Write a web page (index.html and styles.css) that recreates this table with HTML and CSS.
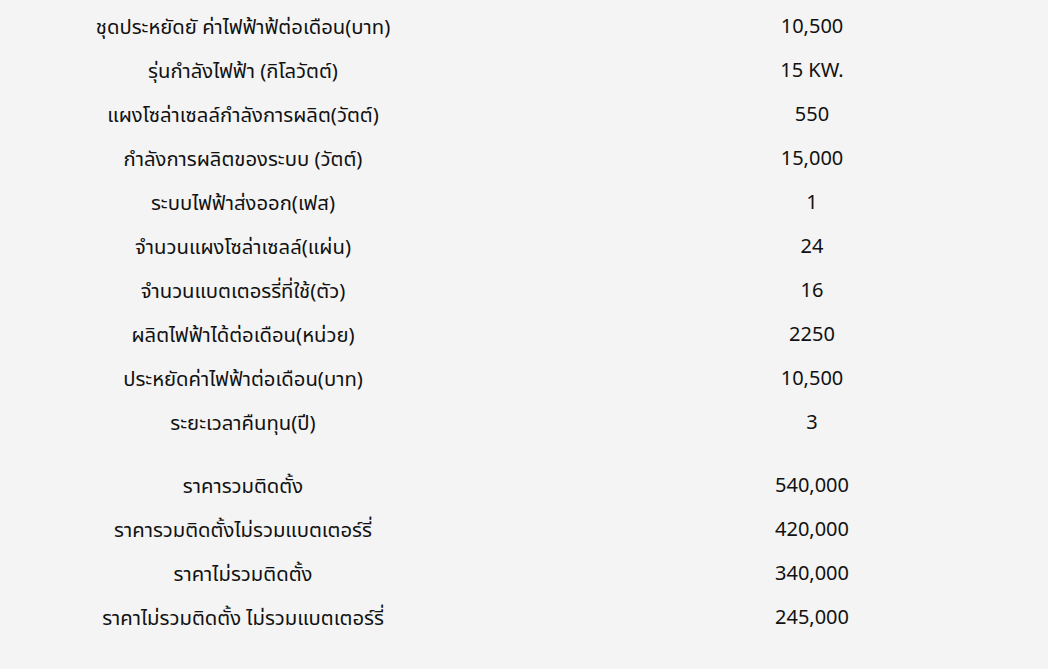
FILE: index.html
```html
<html>
    <head>
        <link rel="stylesheet" href="styles.css">
    </head>
    <body>
        <div class="spec">
            <div class="group">
                <div class="label">ชุดประหยัดยั ค่าไฟฟ้าฟ้ต่อเดือน(บาท)</div><div class="value">10,500</div>
                <div class="label">รุ่นกำลังไฟฟ้า (กิโลวัตต์)</div><div class="value">15 KW.</div>
                <div class="label">แผงโซล่าเซลล์กำลังการผลิต(วัตต์)</div><div class="value">550</div>
                <div class="label">กำลังการผลิตของระบบ (วัตต์)</div><div class="value">15,000</div>
                <div class="label">ระบบไฟฟ้าส่งออก(เฟส)</div><div class="value">1</div>
                <div class="label">จำนวนแผงโซล่าเซลล์(แผ่น)</div><div class="value">24</div>
                <div class="label">จำนวนแบตเตอรรี่ที่ใช้(ตัว)</div><div class="value">16</div>
                <div class="label">ผลิตไฟฟ้าได้ต่อเดือน(หน่วย)</div><div class="value">2250</div>
                <div class="label">ประหยัดค่าไฟฟ้าต่อเดือน(บาท)</div><div class="value">10,500</div>
                <div class="label">ระยะเวลาคืนทุน(ปี)</div><div class="value">3</div>
            </div>
            <div class="group prices">
                <div class="label">ราคารวมติดตั้ง</div><div class="value">540,000</div>
                <div class="label">ราคารวมติดตั้งไม่รวมแบตเตอร์รี่</div><div class="value">420,000</div>
                <div class="label">ราคาไม่รวมติดตั้ง</div><div class="value">340,000</div>
                <div class="label">ราคาไม่รวมติดตั้ง ไม่รวมแบตเตอร์รี่</div><div class="value">245,000</div>
            </div>
        </div>
    </body>
</html>
```

FILE: styles.css
```css
body{
    margin: 0;
    background: #f4f4f4;
    color: #111;
    font-family: "Noto Sans", "Noto Sans Thai", "Open Sans", sans-serif;
    font-size: 20px;
}
.spec{
    padding-top: 4px;
}
.group{
    display: grid;
    grid-template-columns: 486px 472px;
    column-gap: 90px;
}
.prices{
    margin-top: 19px;
}
.label,
.value{
    height: 44px;
    line-height: 44px;
    text-align: center;
}
.label{
    font-size: 20.3px;
}
```
